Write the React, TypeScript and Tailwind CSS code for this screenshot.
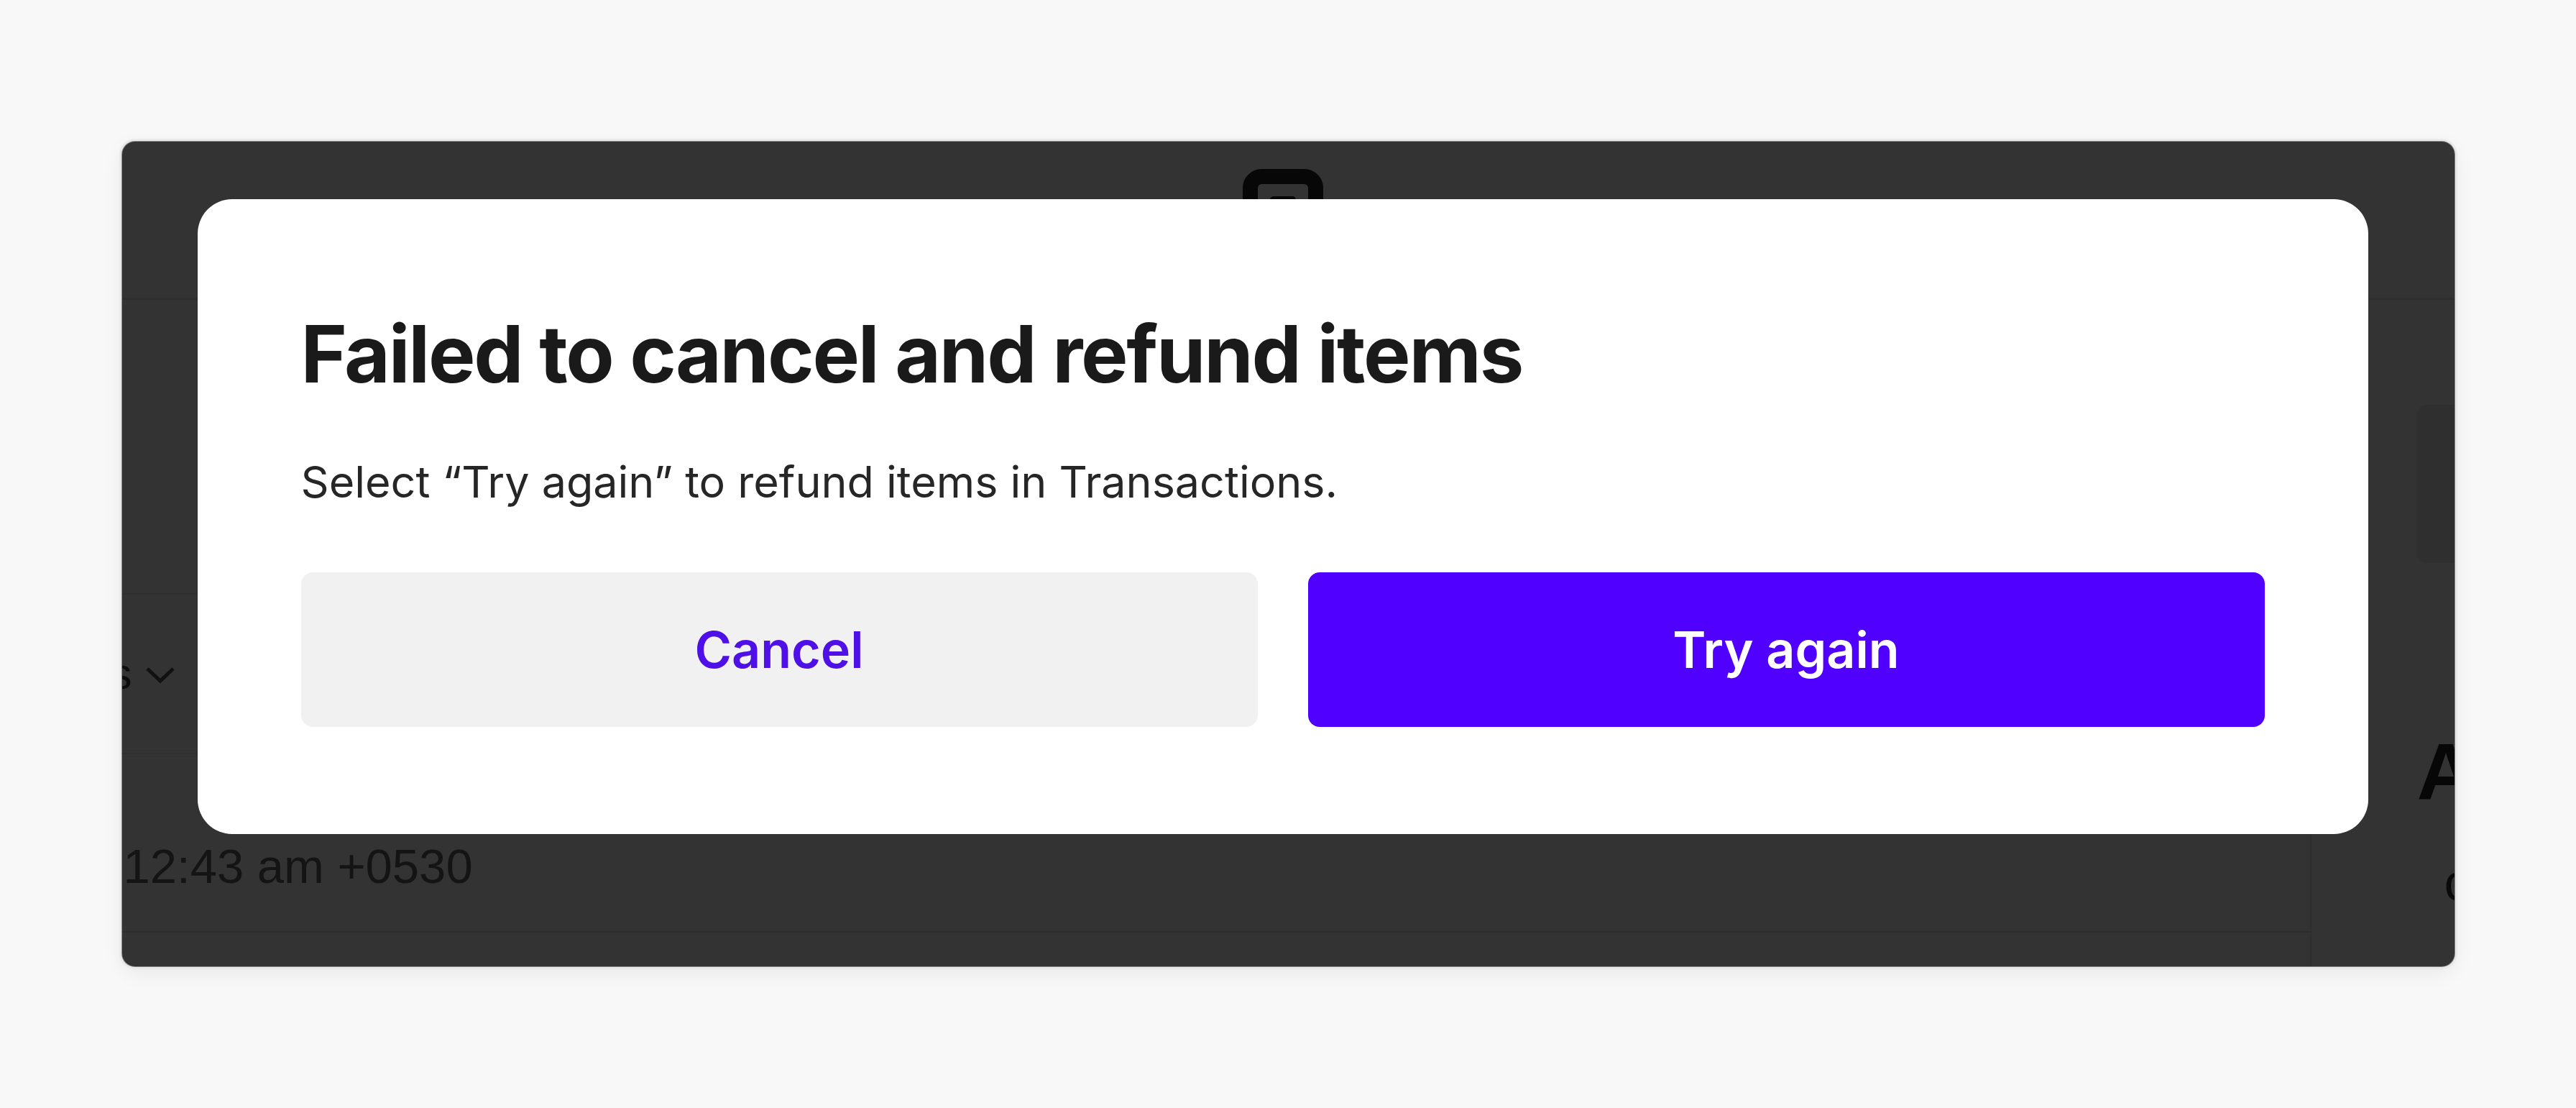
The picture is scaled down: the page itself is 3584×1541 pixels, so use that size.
import React from "react";

export default function App() {
  return (
    <div className="w-[3584px] h-[1541px] bg-[#f8f8f8] flex items-center justify-center">
      <div className="relative w-[3245px] h-[1147px] bg-[#333333] rounded-[18px] overflow-hidden shadow-[0_0_0_1px_#8a8a8a,0_0_0_4px_#e9e9e9,0_8px_28px_rgba(0,0,0,0.07)] flex flex-col font-['Liberation_Sans',Arial,sans-serif]">
        {/* dimmed header */}
        <div className="h-[220px] shrink-0 border-b-[3px] border-[#2e2e2e] flex justify-center items-start pt-[38px] pr-[15px]">
          <svg width="112" height="112" viewBox="0 0 112 112">
            <rect x="10.5" y="10.5" width="91" height="91" rx="16" fill="none" stroke="#070707" strokeWidth="21" />
            <rect x="38" y="38" width="36" height="36" rx="5" fill="#070707" />
          </svg>
        </div>
        {/* dimmed body */}
        <div className="flex flex-1 min-h-0">
          <div className="w-[3044px] shrink-0 flex flex-col">
            <div className="h-[410px] shrink-0 border-b-[2px] border-[#2f2f2f]" />
            <div className="h-[222px] shrink-0 border-b-[2px] border-[#2f2f2f] flex items-center">
              <span className="ml-[-17px] text-[62px] leading-none text-[#0d0d0d]">s</span>
              <svg className="ml-[18px] mt-[4px]" width="42" height="24" viewBox="0 0 42 24">
                <path d="M3 3 L21 20 L39 3" fill="none" stroke="#111111" strokeWidth="5" />
              </svg>
            </div>
            <div className="h-[248px] shrink-0 border-b-[2px] border-[#2e2e2e] pt-[122px] pl-[2px]">
              <div className="text-[67px] leading-none text-[#141414] whitespace-nowrap">12:43 am +0530</div>
            </div>
            <div className="flex-1" />
          </div>
          <div className="flex-1 border-l-[2px] border-[#2d2d2d] pl-[147px] pt-[146px] flex flex-col">
            <div className="h-[220px] w-[200px] shrink-0 rounded-[14px] bg-[#2f2f2f]" />
            <div className="mt-[235px] text-[112px] leading-none font-bold text-[#070707] whitespace-nowrap">A</div>
            <div className="mt-[61px] ml-[38px] text-[72px] leading-none text-[#0a0a0a] whitespace-nowrap">c</div>
          </div>
        </div>

        {/* modal */}
        <div className="absolute left-[105px] top-[80px] w-[3020px] bg-white rounded-[48px] pt-[160px] px-[144px] pb-[149px] font-['Inter',sans-serif]">
          <h1 className="text-[110px] leading-none font-bold tracking-[-0.02em] text-[#1a1a1a] whitespace-nowrap">
            Failed to cancel and refund items
          </h1>
          <p className="mt-[93px] text-[61px] leading-none text-[#262626] whitespace-nowrap">
            Select “Try again” to refund items in Transactions.
          </p>
          <div className="mt-[95px] grid grid-cols-2 gap-[70px]">
            <button className="h-[215px] rounded-[16px] bg-[#f1f1f1] flex items-center justify-center text-[70px] font-semibold text-[#4f10e8]">
              Cancel
            </button>
            <button className="h-[215px] rounded-[16px] bg-[#5000ff] flex items-center justify-center text-[70px] font-semibold text-white">
              Try again
            </button>
          </div>
        </div>
      </div>
    </div>
  );
}
